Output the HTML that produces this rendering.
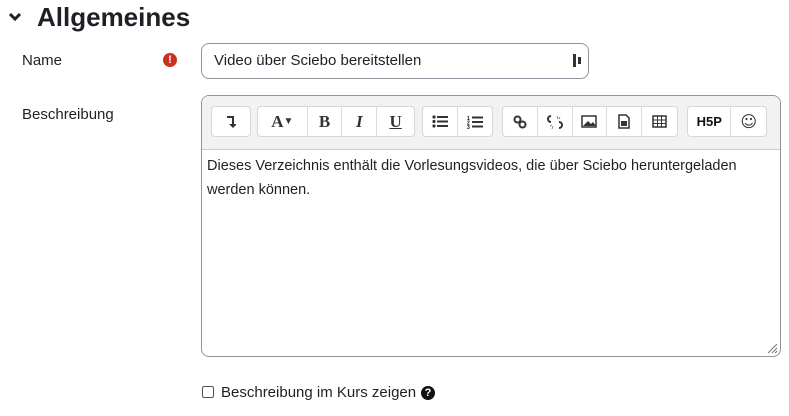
<!DOCTYPE html>
<html><head><meta charset="utf-8"><style>
body{margin:0;width:789px;height:416px;background:#fff;font-family:"Liberation Sans",sans-serif;color:#1d2125;position:relative;overflow:hidden}
.a{position:absolute}
.grp{position:absolute;top:106px;height:31px;border:1px solid #d7d7d7;border-radius:4px;background:#fff;display:flex;box-sizing:border-box}
.grp div{width:35px;height:29px;border-right:1px solid #ddd;display:flex;align-items:center;justify-content:center;font-family:"Liberation Serif",serif;font-weight:bold;font-size:17px;color:#333;box-sizing:border-box}
.grp div:last-child{border-right:none}
</style></head><body>
<svg class="a" style="left:8px;top:12px" width="14" height="10" viewBox="0 0 14 10"><path d="M2 2l5 5 5-5" stroke="#1d2125" stroke-width="3" fill="none"/></svg>
<div class="a" style="left:37px;top:2px;font-size:26px;font-weight:bold">Allgemeines</div>
<div class="a" style="left:22px;top:52px;font-size:15px">Name</div>
<div class="a" style="left:163px;top:53px;width:14px;height:14px;border-radius:50%;background:#ca3120;color:#fff;font-size:11px;font-weight:bold;text-align:center;line-height:14px">!</div>
<div class="a" style="left:201px;top:43px;width:388px;height:36px;border:1px solid #8f959e;border-radius:8px;box-sizing:border-box"></div>
<div class="a" style="left:214px;top:52px;font-size:15px">Video über Sciebo bereitstellen</div>
<div class="a" style="left:573px;top:54px;width:3px;height:13px;background:#333"></div>
<div class="a" style="left:578px;top:57px;width:3px;height:7px;background:#333"></div>
<div class="a" style="left:22px;top:106px;font-size:15px">Beschreibung</div>
<div class="a" style="left:201px;top:95px;width:580px;height:262px;border:1px solid #8f959e;border-radius:8px;box-sizing:border-box;overflow:hidden">
<div style="height:53px;background:#f2f2f2;border-bottom:1px solid #ccc"></div></div>
<div class="grp" style="left:211px;width:40px"><div style="width:38px"><svg width="10" height="13"><path d="M1 2h6v9" stroke="#333" stroke-width="2" fill="none"/><path d="M3 9h8l-4 4z" fill="#333"/></svg></div></div>
<div class="grp" style="left:257px;width:158px"><div style="width:50px">A<span style="font-size:10px">▼</span></div><div>B</div><div style="font-style:italic">I</div><div style="text-decoration:underline;width:37px">U</div></div>
<div class="grp" style="left:422px;width:71px"><div><svg width="16" height="13"><g fill="#333"><circle cx="2" cy="2" r="1.6"/><circle cx="2" cy="6.5" r="1.6"/><circle cx="2" cy="11" r="1.6"/><rect x="5" y="1" width="11" height="2"/><rect x="5" y="5.5" width="11" height="2"/><rect x="5" y="10" width="11" height="2"/></g></svg></div><div><svg width="16" height="14"><g fill="#333"><rect x="5" y="1.5" width="11" height="2"/><rect x="5" y="6" width="11" height="2"/><rect x="5" y="10.5" width="11" height="2"/></g><text x="0" y="5" font-size="5" font-family="Liberation Sans">1</text><text x="0" y="9.5" font-size="5" font-family="Liberation Sans">2</text><text x="0" y="14" font-size="5" font-family="Liberation Sans">3</text></svg></div></div>
<div class="grp" style="left:502px;width:176px"><div><svg width="14" height="14"><circle cx="4.5" cy="4.5" r="3" fill="none" stroke="#333" stroke-width="2"/><circle cx="9.5" cy="9.5" r="3" fill="none" stroke="#333" stroke-width="2"/></svg></div><div><svg width="16" height="16"><path d="M4 2a3 3 0 0 0 0 6M12 14a3 3 0 0 0 0-6" fill="none" stroke="#333" stroke-width="2"/><path d="M10 2l1 3M13 3l-1 2M3 12l2-1M5 15l1-3" stroke="#6a8fc0"/></svg></div><div><svg width="16" height="13"><rect x="1" y="1" width="14" height="11" fill="none" stroke="#333" stroke-width="1.5"/><path d="M2 11l5-5 3 3 2-2 3 4z" fill="#333"/></svg></div><div><svg width="12" height="15"><path d="M1 1h7l3 3v10H1z" fill="none" stroke="#333" stroke-width="1.5"/><rect x="3" y="7" width="6" height="5" fill="#333"/></svg></div><div><svg width="15" height="13"><rect x="1" y="1" width="13" height="11" fill="none" stroke="#333" stroke-width="1.5"/><path d="M1 5h13M1 8.5h13M5.5 1v11M9.5 1v11" stroke="#333"/></svg></div></div>
<div class="grp" style="left:687px;width:80px"><div style="width:44px;font-family:'Liberation Sans';font-size:13px;font-weight:900;color:#111">H5P</div><div style="font-family:'DejaVu Sans';font-weight:normal;font-size:16px">☺</div></div>
<div class="a" style="left:207px;top:154px;width:565px;font-size:14.5px;line-height:24px;color:#1d2125">Dieses Verzeichnis enthält die Vorlesungsvideos, die über Sciebo heruntergeladen werden können.</div>
<svg class="a" style="left:766px;top:342px" width="12" height="12"><path d="M11 2L2 11M11 6L6 11M11 9L9 11" stroke="#777"/></svg>
<div class="a" style="left:202px;top:386px;width:12px;height:12px;border:1px solid #555;border-radius:2px;box-sizing:border-box"></div>
<div class="a" style="left:221px;top:384px;font-size:15px">Beschreibung im Kurs zeigen</div>
<div class="a" style="left:421px;top:386px;width:14px;height:14px;border-radius:50%;background:#111;color:#fff;font-size:11px;font-weight:bold;text-align:center;line-height:14px">?</div>
</body></html>
